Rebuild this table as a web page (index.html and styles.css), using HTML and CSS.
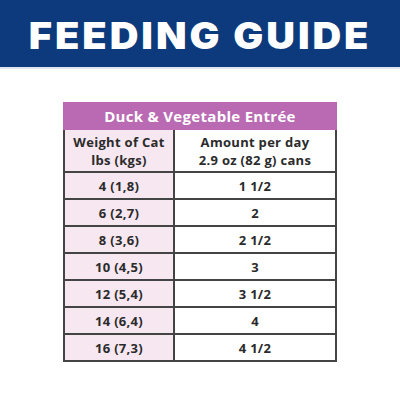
FILE: index.html
```html
<!DOCTYPE html>
<html>
    <head>
        <link rel="stylesheet" href="styles.css">
    </head>
    <body>
        <div class="banner">
            <h1 class="title">FEEDING GUIDE</h1>
        </div>
        <div class="content">
            <table class="guide">
                <tr>
                    <th class="product" colspan="2">Duck &amp; Vegetable Entrée</th>
                </tr>
                <tr class="head">
                    <td class="weight">Weight of Cat<br>lbs (kgs)</td>
                    <td class="amount">Amount per day<br>2.9 oz (82 g) cans</td>
                </tr>
                <tr><td class="weight">4 (1,8)</td><td class="amount">1 1/2</td></tr>
                <tr><td class="weight">6 (2,7)</td><td class="amount">2</td></tr>
                <tr><td class="weight">8 (3,6)</td><td class="amount">2 1/2</td></tr>
                <tr><td class="weight">10 (4,5)</td><td class="amount">3</td></tr>
                <tr><td class="weight">12 (5,4)</td><td class="amount">3 1/2</td></tr>
                <tr><td class="weight">14 (6,4)</td><td class="amount">4</td></tr>
                <tr><td class="weight">16 (7,3)</td><td class="amount">4 1/2</td></tr>
            </table>
        </div>
    </body>
</html>
```

FILE: styles.css
```css
body {
    margin: 0;
    background-color: white;
    font-family: "Open Sans", "Liberation Sans", sans-serif;
}
.banner {
    height: 67px;
    background-color: #0c3a7c;
    border-bottom: 2px solid #dfe6f1;
    display: flex;
    align-items: center;
    justify-content: center;
}
.title {
    margin: 5px 0 0;
    color: white;
    font-family: Inter, "Liberation Sans", sans-serif;
    font-weight: 900;
    font-size: 36.5px;
    letter-spacing: 2.7px;
    transform: scaleX(1.09);
}
.content {
    display: flex;
    justify-content: center;
    padding-top: 33px;
}
.guide {
    width: 274px;
    border-collapse: collapse;
    color: #2b2b2b;
    font-size: 13px;
    font-weight: 700;
    letter-spacing: 0.3px;
    text-align: center;
}
.guide td,
.guide th {
    border: 2px solid #444;
    padding: 0;
    height: 25px;
}
.guide .product {
    height: 24px;
    background-color: #b96ab3;
    color: white;
    font-size: 15px;
    font-weight: 700;
    border-color: #b96ab3;
}
.guide .head td {
    height: 41px;
    line-height: 18px;
}
.guide .weight {
    width: 108px;
    background-color: #f6e7f1;
}
.guide .amount {
    background-color: white;
}
```
